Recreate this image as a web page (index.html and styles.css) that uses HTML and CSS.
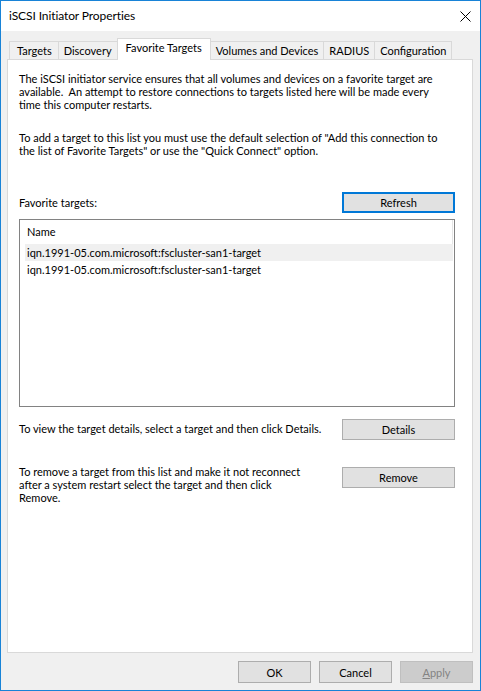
FILE: index.html
```html
<!DOCTYPE html>
<html lang="en">
<head>
  <meta charset="UTF-8">
  <meta name="viewport" content="width=device-width, initial-scale=1.0">
  <title>iSCSI Initiator Properties</title>
  <link rel="stylesheet" href="styles.css">
</head>
<body>
  <div class="window">
    <div class="titlebar">
      <span class="title">iSCSI Initiator Properties</span>
      <svg class="close" width="11" height="11" viewBox="0 0 11 11">
        <path d="M0.5 0.5L10.5 10.5M10.5 0.5L0.5 10.5" stroke="#000" stroke-width="1" fill="none"/>
      </svg>
    </div>

    <div class="client">
      <div class="tabs">
        <div class="tab">Targets</div>
        <div class="tab">Discovery</div>
        <div class="tab active">Favorite Targets</div>
        <div class="tab">Volumes and Devices</div>
        <div class="tab">RADIUS</div>
        <div class="tab">Configuration</div>
      </div>

      <div class="panel">
        <p class="intro">The iSCSI initiator service ensures that all volumes and devices on a favorite target are<br>available.&nbsp; An attempt to restore connections to targets listed here will be made every<br>time this computer restarts.</p>
        <p class="intro second">To add a target to this list you must use the default selection of "Add this connection to<br>the list of Favorite Targets" or use the "Quick Connect" option.</p>

        <div class="list-head">
          <span>Favorite targets:</span>
          <button class="btn default">Refresh</button>
        </div>

        <div class="listbox">
          <div class="col-head">Name</div>
          <div class="row selected">iqn.1991-05.com.microsoft:fscluster-san1-target</div>
          <div class="row">iqn.1991-05.com.microsoft:fscluster-san1-target</div>
        </div>

        <div class="action details">
          <p>To view the target details, select a target and then click Details.</p>
          <button class="btn">Details</button>
        </div>

        <div class="action remove">
          <p>To remove a target from this list and make it not reconnect<br>after a system restart select the target and then click<br>Remove.</p>
          <button class="btn">Remove</button>
        </div>
      </div>

      <div class="footer">
        <button class="btn dlg">OK</button>
        <button class="btn dlg">Cancel</button>
        <button class="btn dlg disabled"><u>A</u>pply</button>
      </div>
    </div>
  </div>
</body>
</html>
```

FILE: styles.css
```css
body {
  margin: 0;
  background: #fff;
  font-family: Lato, 'Liberation Sans', sans-serif;
  font-size: 11px;
  color: #000;
}
.window {
  width: 481px;
  height: 691px;
  box-sizing: border-box;
  border: 1px solid #1883d7;
  display: flex;
  flex-direction: column;
}
/* Title bar */
.titlebar {
  height: 30px;
  background: #fff;
  display: flex;
  align-items: center;
  justify-content: space-between;
  padding: 0 9px 0 8px;
}
.title {
  font-size: 12px;
  letter-spacing: -0.1px;
  line-height: 14px;
}
.close {
  display: block;
  margin-top: 1px;
}
/* Dialog client area */
.client {
  flex: 1;
  background: #f0f0f0;
  padding: 7px 7px 0 6px;
  display: flex;
  flex-direction: column;
}
.tabs {
  display: flex;
  align-items: flex-end;
  padding-left: 2px;
  height: 21px;
}
.tab {
  height: 18px;
  box-sizing: border-box;
  border: 1px solid #d9d9d9;
  border-bottom: none;
  padding: 0 5px;
  line-height: 18px;
  background: #f0f0f0;
  white-space: nowrap;
}
.tab:first-child {
  padding: 0 6px 0 7px;
}
.tab + .tab {
  margin-left: -1px;
}
.tab.active {
  height: 22px;
  margin-bottom: -1px;
  padding: 0 8px;
  background: #fff;
  line-height: 17px;
  position: relative;
  z-index: 1;
}
.panel {
  height: 594px;
  box-sizing: border-box;
  background: #fff;
  border: 1px solid #d9d9d9;
  padding: 12px 17px 0 11px;
}
.intro {
  margin: 0;
  line-height: 13px;
}
.intro.second {
  margin-top: 20px;
}
.list-head {
  margin-top: 35px;
  display: flex;
  align-items: center;
  justify-content: space-between;
}
.btn {
  font-family: inherit;
  font-size: 11px;
  color: #000;
  background: #e1e1e1;
  border: 1px solid #adadad;
  border-radius: 0;
  padding: 0;
  margin: 0;
  width: 113px;
  height: 21px;
  line-height: 17px;
  flex-shrink: 0;
}
.btn.default {
  border: 2px solid #0078d7;
}
.listbox {
  margin-top: 6px;
  height: 188px;
  box-sizing: border-box;
  border: 1px solid #828282;
}
.col-head {
  height: 24px;
  line-height: 24px;
  padding-left: 7px;
  margin-right: 1px;
  border-right: 1px solid #e5e5e5;
}
.row {
  height: 17px;
  line-height: 17px;
  margin: 0 1px 0 5px;
  padding-left: 2px;
}
.row.selected {
  background: #f0f0f0;
}
.action {
  display: flex;
  justify-content: space-between;
  align-items: flex-start;
}
.action p {
  margin: 0;
  line-height: 13px;
}
.action.details {
  margin-top: 12px;
}
.action.details p {
  padding-top: 3px;
}
.action.remove {
  margin-top: 25px;
}
.action.remove .btn {
  margin-top: 2px;
}
/* OK / Cancel / Apply */
.footer {
  margin-top: 8px;
  display: flex;
  justify-content: flex-end;
  gap: 8px;
}
.btn.dlg {
  width: 73px;
  height: 22px;
}
.btn.disabled {
  background: #cccccc;
  border-color: #bfbfbf;
  color: #838383;
}
```
